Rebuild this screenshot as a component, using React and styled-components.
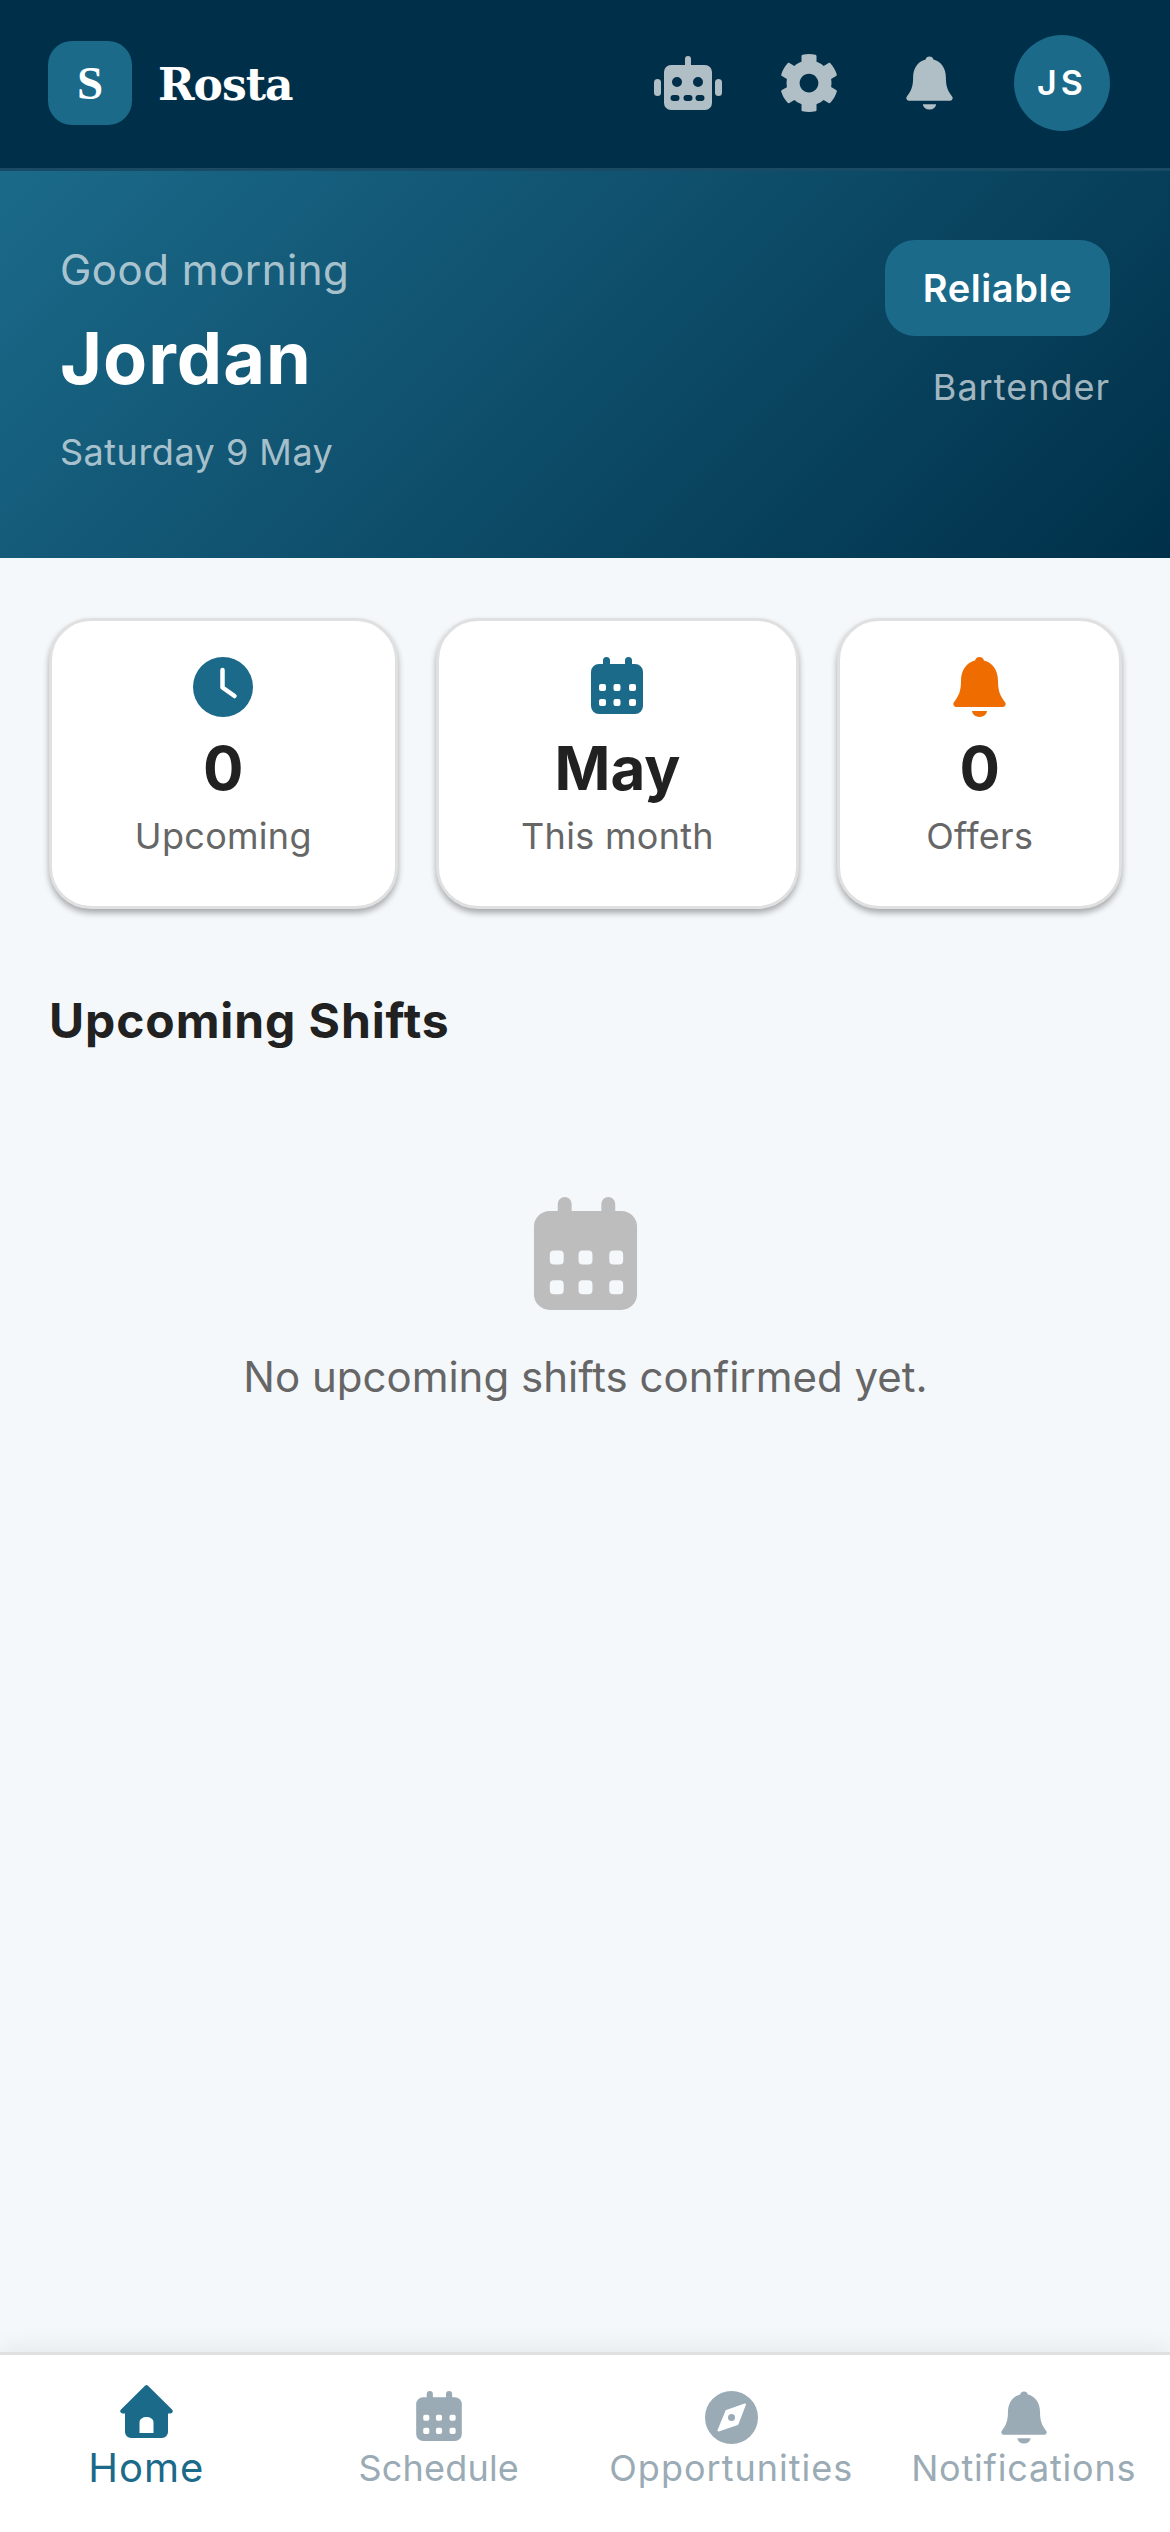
import React from 'react'
import styled, { createGlobalStyle } from 'styled-components'
import { FaCog } from 'react-icons/fa'

const GlobalStyle = createGlobalStyle`
  * { box-sizing: border-box; }
  html, body { margin: 0; padding: 0; }
  body { font-family: Inter, "Liberation Sans", sans-serif; background: #f4f8fb; }
`

const RobotIcon = () => (
  <svg width="68" height="54" viewBox="0 0 68 54" fill="#b0bec5">
    <rect x="0" y="23" width="7" height="17" rx="3.5" />
    <rect x="61" y="23" width="7" height="17" rx="3.5" />
    <path
      fillRule="evenodd"
      d="M34 0a3 3 0 0 1 3 3v6h14a7 7 0 0 1 7 7v31a7 7 0 0 1-7 7H17a7 7 0 0 1-7-7V16a7 7 0 0 1 7-7h14V3a3 3 0 0 1 3-3Z
      M23 21a5 5 0 1 0 0 10a5 5 0 1 0 0-10Z
      M44 21a5 5 0 1 0 0 10a5 5 0 1 0 0-10Z
      M19.500 39a2.500 2.500 0 0 0 0 6h3a2.500 2.500 0 0 0 0-6Z
      M32.500 39a2.500 2.500 0 0 0 0 6h3a2.500 2.500 0 0 0 0-6Z
      M44.500 39a2.500 2.500 0 0 0 0 6h3a2.500 2.500 0 0 0 0-6Z"
    />
  </svg>
)

const HomeIcon = () => (
  <svg width="53" height="53" viewBox="0 0 53 53" fill="#1b6a8a">
    <path
      fillRule="evenodd"
      d="M25 .8a2.200 2.200 0 0 1 3 0L52 24.500a2.300 2.300 0 0 1-1.500 4H48V47a6 6 0 0 1-6 6H11a6 6 0 0 1-6-6V28.500H2.500a2.300 2.300 0 0 1-1.500-4Z
      M19.500 48H33.500V37a7 5 0 0 0-14 0Z"
    />
  </svg>
)

const calendarHoles = [8, 22.500, 38]
  .flatMap((x) => [27, 42].map((y) => `M${x + 2} ${y}h3a2 2 0 0 1 2 2v3a2 2 0 0 1-2 2h-3a2 2 0 0 1-2-2v-3a2 2 0 0 1 2-2Z`))
  .join(' ')

const CalendarIcon = ({ width = 52, height = 57, color }) => (
  <svg width={width} height={height} viewBox="0 0 52 57" fill={color}>
    <path
      fillRule="evenodd"
      d={`M15.500 0a3.500 3.500 0 0 1 3.500 3.500V7h15V3.500a3.500 3.500 0 0 1 7 0V7h3a8 8 0 0 1 8 8v34a8 8 0 0 1-8 8H8a8 8 0 0 1-8-8V15a8 8 0 0 1 8-8h4V3.500a3.500 3.500 0 0 1 3.500-3.500Z ${calendarHoles}`}
    />
  </svg>
)

const BellIcon = ({ width = 53, height = 60, color }) => (
  <svg width={width} height={height} viewBox="0 0 53 60" fill={color}>
    <path d="M26.500 0a4.500 4.500 0 0 1 4.400 3.600C39.500 5.500 45 13.500 45 24c0 10 2 14.500 7.200 21.500a3 3 0 0 1-2.200 4.500H3a3 3 0 0 1-2.200-4.500C6 38.500 8 34 8 24c0-10.500 5.500-18.500 14.100-20.400A4.500 4.500 0 0 1 26.500 0Z" />
    <path d="M19 54h15a7.500 6 0 0 1-15 0Z" />
  </svg>
)

const ClockIcon = ({ color }) => (
  <svg width="60" height="60" viewBox="0 0 60 60">
    <circle cx="30" cy="30" r="30" fill={color} />
    <path d="M29.500 13v17.500L41.500 39" fill="none" stroke="#fff" strokeWidth="4.500" strokeLinecap="round" strokeLinejoin="round" />
  </svg>
)

const CompassIcon = ({ color }) => (
  <svg width="53" height="53" viewBox="0 0 53 53">
    <circle cx="26.500" cy="26.500" r="26.500" fill={color} />
    <path d="M40 13.500 21.500 20 13.500 39.500 32.500 33Z" fill="#fff" stroke="#fff" strokeWidth="2" strokeLinejoin="round" />
    <circle cx="26.500" cy="26.500" r="3.500" fill={color} />
  </svg>
)

const NAV_GREY = '#9aabb5'

const stats = [
  { key: 'upcoming', icon: <ClockIcon color="#1b6a8a" />, value: '0', label: 'Upcoming', width: 349 },
  { key: 'month', icon: <CalendarIcon color="#1b6a8a" />, value: 'May', label: 'This month', width: 364 },
  { key: 'offers', icon: <BellIcon color="#ef6c00" />, value: '0', label: 'Offers', width: 285 },
]

const tabs = [
  { key: 'home', label: 'Home', active: true, spacing: 1, icon: <HomeIcon /> },
  { key: 'schedule', label: 'Schedule', spacing: 0.2, icon: <CalendarIcon width={46} height={50} color={NAV_GREY} /> },
  { key: 'opportunities', label: 'Opportunities', spacing: 1, icon: <CompassIcon color={NAV_GREY} /> },
  { key: 'notifications', label: 'Notifications', spacing: 0.8, icon: <BellIcon width={46} height={53} color={NAV_GREY} /> },
]

const App = () => {
  return (
    <>
      <GlobalStyle />
      <Page>
        <TopBar>
          <Brand>
            <LogoBox>S</LogoBox>
            <BrandName>Rosta</BrandName>
          </Brand>
          <TopActions>
            <ActionSlot><RobotIcon /></ActionSlot>
            <ActionSlot><FaCog size={60} color="#b0bec5" /></ActionSlot>
            <ActionSlot><BellIcon width={47} height={54} color="#b0bec5" /></ActionSlot>
            <Avatar>JS</Avatar>
          </TopActions>
        </TopBar>

        <Hero>
          <div>
            <Greeting>Good morning</Greeting>
            <UserName>Jordan</UserName>
            <DateText>Saturday 9 May</DateText>
          </div>
          <HeroSide>
            <Badge>Reliable</Badge>
            <RoleText>Bartender</RoleText>
          </HeroSide>
        </Hero>

        <Content>
          <StatsRow>
            {stats.map(({ key, icon, value, label, width }) => (
              <StatCard key={key} $width={width}>
                <StatIcon>{icon}</StatIcon>
                <StatValue>{value}</StatValue>
                <StatLabel>{label}</StatLabel>
              </StatCard>
            ))}
          </StatsRow>

          <SectionTitle>Upcoming Shifts</SectionTitle>

          <EmptyState>
            <CalendarIcon width={105} height={113} color="#bdbdbd" />
            <EmptyText>No upcoming shifts confirmed yet.</EmptyText>
          </EmptyState>
        </Content>

        <BottomNav>
          {tabs.map(({ key, label, icon, active, spacing }) => (
            <NavItem key={key}>
              <NavIconSlot $active={active}>{icon}</NavIconSlot>
              <NavLabel $active={active} $spacing={spacing}>{label}</NavLabel>
            </NavItem>
          ))}
        </BottomNav>
      </Page>
    </>
  )
}

const Page = styled.div`
  display: flex;
  flex-direction: column;
  height: 2532px;
  overflow: hidden;
  background: #f4f8fb;
`

const TopBar = styled.header`
  display: flex;
  align-items: center;
  justify-content: space-between;
  height: 171px;
  padding: 0 60px 3px 48px;
  background: #003049;
  border-bottom: 3px solid #1b4a64;
`

const Brand = styled.div`
  display: flex;
  align-items: center;
  gap: 26px;
`

const LogoBox = styled.div`
  display: flex;
  align-items: center;
  justify-content: center;
  width: 84px;
  height: 84px;
  border-radius: 24px;
  background: #1b6a8a;
  color: #fff;
  font-family: "Liberation Serif", "DejaVu Serif", serif;
  font-size: 47px;
  font-weight: 700;
`

const BrandName = styled.div`
  margin-top: 3px;
  color: #fff;
  font-family: "DejaVu Serif", "Liberation Serif", serif;
  font-size: 44px;
  font-weight: 700;
  letter-spacing: -1px;
`

const TopActions = styled.div`
  display: flex;
  align-items: center;
`

const ActionSlot = styled.div`
  display: flex;
  align-items: center;
  justify-content: center;
  width: 121px;
`

const Avatar = styled.div`
  display: flex;
  align-items: center;
  justify-content: center;
  width: 96px;
  height: 96px;
  margin-left: 24px;
  border-radius: 50%;
  background: #1b6a8a;
  color: #fff;
  font-size: 34px;
  font-weight: 600;
  letter-spacing: 4px;
`

const Hero = styled.section`
  display: flex;
  justify-content: space-between;
  align-items: flex-start;
  height: 387px;
  padding: 69px 60px 0 60px;
  background: linear-gradient(135deg, #1b6a8a 0%, #003049 100%);
`

const Greeting = styled.div`
  color: rgba(255, 255, 255, 0.65);
  font-size: 42px;
  line-height: 60px;
  letter-spacing: 0.5px;
`

const UserName = styled.div`
  margin-top: 13px;
  color: #fff;
  font-size: 72px;
  font-weight: 700;
  line-height: 90px;
  letter-spacing: 1px;
`

const DateText = styled.div`
  margin-top: 25px;
  color: rgba(255, 255, 255, 0.65);
  font-size: 36px;
  line-height: 48px;
  letter-spacing: 0.5px;
`

const HeroSide = styled.div`
  display: flex;
  flex-direction: column;
  align-items: flex-end;
`

const Badge = styled.div`
  display: flex;
  align-items: center;
  justify-content: center;
  width: 225px;
  height: 96px;
  border-radius: 30px;
  background: #1b6a8a;
  color: #fff;
  font-size: 38px;
  font-weight: 600;
  letter-spacing: 0.6px;
`

const RoleText = styled.div`
  margin-top: 27px;
  color: rgba(255, 255, 255, 0.65);
  font-size: 36px;
  line-height: 48px;
  letter-spacing: 1px;
`

const Content = styled.main`
  flex: 1;
  padding: 60px 48px 0 49px;
`

const StatsRow = styled.div`
  display: flex;
  gap: 38px;
`

const StatCard = styled.div`
  display: flex;
  flex-direction: column;
  align-items: center;
  width: ${(p) => p.$width}px;
  height: 291px;
  padding-top: 36px;
  background: #fff;
  border: 3px solid #e0e0e0;
  border-radius: 42px;
  box-shadow: 0 4px 6px rgba(0, 0, 0, 0.32);
`

const StatIcon = styled.div`
  display: flex;
  justify-content: center;
  height: 60px;
`

const StatValue = styled.div`
  margin-top: 15px;
  color: #212121;
  font-size: 60px;
  font-weight: 700;
  line-height: 72px;
`

const StatLabel = styled.div`
  margin-top: 8px;
  color: #666;
  font-size: 36px;
  line-height: 48px;
  letter-spacing: 0.3px;
`

const SectionTitle = styled.h2`
  margin: 82px 0 0;
  color: #212121;
  font-size: 48px;
  font-weight: 700;
  line-height: 60px;
  letter-spacing: 0.9px;
`

const EmptyState = styled.div`
  display: flex;
  flex-direction: column;
  align-items: center;
  margin-top: 146px;
`

const EmptyText = styled.div`
  margin-top: 37px;
  color: #666;
  font-size: 42px;
  line-height: 60px;
`

const BottomNav = styled.nav`
  display: grid;
  grid-template-columns: repeat(4, 1fr);
  height: 180px;
  padding-top: 30px;
  background: #fff;
  border-top: 3px solid #e0e0e0;
  box-shadow: 0 -6px 20px rgba(0, 0, 0, 0.06);
`

const NavItem = styled.div`
  display: flex;
  flex-direction: column;
  align-items: center;
`

const NavIconSlot = styled.div`
  display: flex;
  justify-content: center;
  height: 59px;
  padding-top: ${(p) => (p.$active ? '0' : '6px')};
`

const NavLabel = styled.div`
  color: ${(p) => (p.$active ? '#1b6a8a' : '#9aabb5')};
  font-size: ${(p) => (p.$active ? '40px' : '36px')};
  line-height: 48px;
  letter-spacing: ${(p) => p.$spacing}px;
`

export default App
